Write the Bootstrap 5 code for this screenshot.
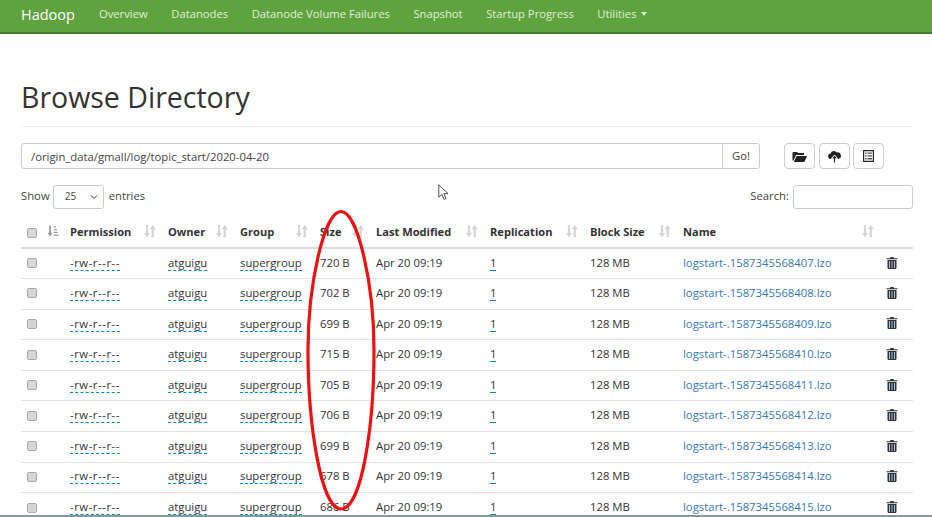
<!doctype html>
<html lang="en">
<head>
<meta charset="utf-8">
<title>Browse Directory</title>
<link rel="stylesheet" href="https://cdn.jsdelivr.net/npm/bootstrap@5.3.0/dist/css/bootstrap.min.css">
<style>
html,body{height:517px;overflow:hidden}
body{font-family:"Open Sans","Noto Sans",sans-serif;font-size:11.3px;color:#333;background:#fff;position:relative}
.hd-bar{background:#5fa33e;height:34px;border-bottom:2px solid #3f7d2c;padding:0 0 0 21px;flex-wrap:nowrap;justify-content:flex-start}
.hd-brand{color:#fff;font-size:14.500px;padding:0;margin:0 24px 0 0;line-height:28px;position:relative;top:-1px}
.hd-link{color:#e2eedc;font-size:11.250px;text-decoration:none;line-height:28px;margin-right:23.500px;white-space:nowrap;position:relative;top:-2px}
.hd-caret{display:inline-block;border-top:4px solid;border-left:3.500px solid transparent;border-right:3.500px solid transparent;margin-left:4px;vertical-align:2px}
.hd-page{padding:0 19px 0 21px}
.hd-title{font-size:28.500px;font-weight:400;line-height:40px;margin:43px 0 10px;padding-bottom:9px;border-bottom:1px solid #eee;height:50px;color:#333}
.hd-path{width:739px;flex:none}
.hd-path .form-control{height:26px;font-size:11.300px;padding:2px 9px;border-color:#ccc;border-radius:3px 0 0 3px;color:#444}
.hd-path .btn{height:26px;width:38px;flex:none;font-size:11.300px;padding:2px 0;border-color:#ccc;color:#444;border-radius:0 3px 3px 0}
.hd-tools{margin:0 0 15px;padding-top:6px}
.hd-iconbtn{width:31px;height:26px;padding:0;border:1px solid #ccc;border-radius:4px;background:#fff;display:flex;align-items:center;justify-content:center}
.hd-iconrow{margin-left:24px;gap:3.500px}
.hd-filter{height:25px;margin-bottom:7px;font-size:11.300px;color:#444}
.hd-filter .form-select{width:51px;height:24px;font-size:10px;padding:2px 4px 2px 11px;margin:0 5px 0 3px;border-color:#ccc;border-radius:3px;background-size:8px;background-position:right 5px center;color:#444}
.hd-filter .form-control{width:120px;height:24px;margin-left:4px;border-color:#ccc;border-radius:3px}
.hd-table{table-layout:fixed;width:892px;margin:0;font-size:11.300px;color:#333}
.hd-table th{font-weight:700;font-size:11.100px;height:32px;padding:2px 6px 0;border-bottom:2px solid #ddd;position:relative;white-space:nowrap;color:#333;vertical-align:middle}
.hd-table td{height:30.600px;padding:0 6px 1px;border-bottom:1px solid #e4e4e4;vertical-align:middle;white-space:nowrap;color:#333}
.hd-sort{position:absolute;right:5px;top:9px;color:#d5d5d5}
.hd-sort-on{position:absolute;left:26px;top:9px;color:#999}
.hd-check{display:block;width:10px;height:10px;background:#d6d6d6;border:1px solid #aaa;border-radius:2px}
.hd-edit{color:#333;text-decoration:none;border-bottom:1px dashed #0088cc}
.hd-perm{letter-spacing:.55px}
.hd-file{color:#337ab7;text-decoration:none}
.hd-bin{display:block;margin-bottom:1px}
.hd-oval{position:absolute;left:300px;top:205px;width:84px;height:312px;pointer-events:none}
.hd-cursor{position:absolute;left:438px;top:184px;width:12px;height:17px}
.hd-edge{position:absolute;left:0;right:0;bottom:0;height:2px;background:#8a9a9a}
</style>
</head>
<body>
<nav class="navbar hd-bar">
  <span class="navbar-brand hd-brand">Hadoop</span>
  <a class="hd-link" href="#">Overview</a>
  <a class="hd-link" href="#">Datanodes</a>
  <a class="hd-link" href="#">Datanode Volume Failures</a>
  <a class="hd-link" href="#">Snapshot</a>
  <a class="hd-link" href="#">Startup Progress</a>
  <a class="hd-link" href="#">Utilities<span class="hd-caret"></span></a>
</nav>
<main class="hd-page">
  <h1 class="hd-title">Browse Directory</h1>
  <div class="d-flex hd-tools">
    <div class="input-group hd-path">
      <input class="form-control" type="text" value="/origin_data/gmall/log/topic_start/2020-04-20">
      <button class="btn" type="button">Go!</button>
    </div>
    <div class="d-flex hd-iconrow">
      <button class="hd-iconbtn" type="button" aria-label="Create directory"><svg width="15" height="12" viewBox="0 0 15 12"><path fill="#222" d="M1 2h4l1 1h6v2H4L1.500 10.500H.5V3zM4.600 6H15l-2.600 6H1.800z"/></svg></button>
      <button class="hd-iconbtn" type="button" aria-label="Upload"><svg width="13" height="13" viewBox="0 0 13 13"><path fill="#222" d="M3 9a2.700 2.700 0 0 1-.4-5.400A3.400 3.400 0 0 1 8.800 2.500 2.700 2.700 0 0 1 10.500 9z"/><path fill="#222" stroke="#fff" stroke-width="1" stroke-linejoin="miter" d="M6.500 5l3.200 3.700H7.600V13H5.400V8.700H3.300z"/></svg></button>
      <button class="hd-iconbtn" type="button" aria-label="Cut and paste"><svg width="11" height="12" viewBox="0 0 11 12"><path fill="#222" fill-rule="evenodd" d="M0 0h11v12H0zM1.200 1.200v9.600h8.600V1.200z"/><path fill="#555" d="M2 2.400h1.600v1.400H2zM4.400 2.400H9v1.400H4.400zM2 5.200h1.600v1.400H2zM4.400 5.200H9v1.400H4.400zM2 8h1.600v1.400H2zM4.400 8H9v1.400H4.400z"/></svg></button>
    </div>
  </div>
  <div class="d-flex align-items-center justify-content-between hd-filter">
    <label class="d-flex align-items-center">Show
      <select class="form-select" aria-label="Entries"><option>25</option></select>
    entries</label>
    <label class="d-flex align-items-center">Search:<input class="form-control" type="search"></label>
  </div>
  <table class="table hd-table" id="hd-tbl">
    <colgroup><col style="width:43px"><col style="width:98px"><col style="width:72px"><col style="width:80px"><col style="width:56px"><col style="width:114px"><col style="width:100px"><col style="width:93px"><col style="width:203px"><col style="width:33px"></colgroup>
    <thead><tr id="hd-head"></tr></thead>
    <tbody id="hd-body"></tbody>
  </table>
</main>
<svg class="hd-cursor" viewBox="0 0 12 17"><path fill="#fff" stroke="#555" stroke-width="1" d="M.8.8v12.400l3-2.800 2.200 5 2-.9-2.200-4.900h4.200z"/></svg>
<svg class="hd-oval" viewBox="300 205 84 312"><path fill="none" stroke="#f01010" stroke-width="3.200" d="M341 211.500C358 211.500 374 285 374 350C374 425 362 509 341 509C321 509 308 425 308 350C308 285 324 211.500 341 211.500Z"/></svg>
<div class="hd-edge"></div>
<script src="https://cdn.jsdelivr.net/npm/bootstrap@5.3.0/dist/js/bootstrap.bundle.min.js"></script>
<script>
const sort='<svg class="hd-sort" width="14" height="13" viewBox="0 0 14 13"><path fill="currentColor" d="M3 0h2.400v8.500H7.500L4.200 13 .9 8.500H3zM9 13h2.400V4.500h2.100L10.200 0 6.900 4.500H9z" transform="scale(.95)"/></svg>';
const heads=['Permission','Owner','Group','Size','Last Modified','Replication','Block Size','Name'];
let h='<th><span class="hd-check"></span><svg class="hd-sort-on" width="12" height="12" viewBox="0 0 14 13"><path fill="currentColor" d="M2.500 0h2v8.500h2L3.500 13 .5 8.500h2zM8 1h2.500v1.500H8zM8 4.200h3.500v1.500H8zM8 7.400h4.500v1.500H8zM8 10.600h5.500v1.500H8z"/></svg></th>';
heads.forEach(t=>h+='<th>'+t+sort+'</th>');
h+='<th></th>';
document.getElementById('hd-head').innerHTML=h;
const bin='<svg class="hd-bin" width="12" height="12" viewBox="0 0 12 12"><path fill="#333" d="M4.500 0h3l.5 1.200h3.500v1H.5v-1H4z"/><path fill="#333" d="M1.500 3h9v8.200l-.8.800H2.300l-.8-.8z"/><path fill="#9fc4e4" d="M3 4h1v7H3zM5.500 4h1v7h-1zM8 4h1v7H8z"/></svg>';
const sizes=[720,702,699,715,705,706,699,678,686];
let b='';
sizes.forEach((s,i)=>{b+='<tr><td><span class="hd-check"></span></td><td><a class="hd-edit hd-perm" href="#">-rw-r--r--</a></td><td><a class="hd-edit" href="#">atguigu</a></td><td><a class="hd-edit" href="#">supergroup</a></td><td>'+s+' B</td><td>Apr 20 09:19</td><td><a class="hd-edit" href="#">1</a></td><td>128 MB</td><td><a class="hd-file" href="#">logstart-.'+(1587345568407+i)+'.lzo</a></td><td>'+bin+'</td></tr>';});
document.getElementById('hd-body').innerHTML=b;
</script>
</body>
</html>
